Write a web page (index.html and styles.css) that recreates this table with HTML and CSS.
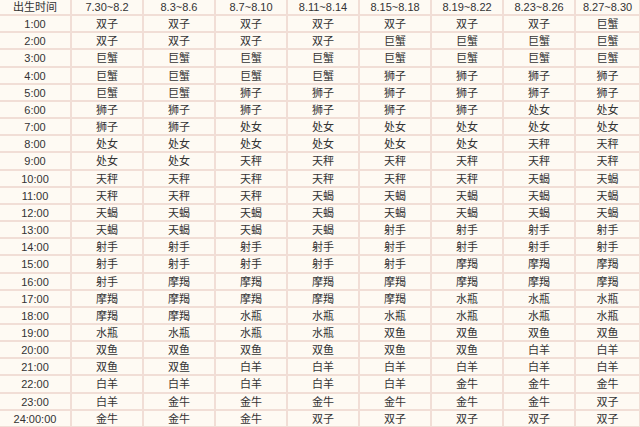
FILE: index.html
```html
<!DOCTYPE html>
<html lang="zh">
<head>
<meta charset="utf-8">
<title>出生时间星座表</title>
<link rel="stylesheet" href="styles.css">
</head>
<body>
<table class="zodiac">
<colgroup><col class="c"><col class="c"><col class="c"><col class="c"><col class="c"><col class="c"><col class="c"><col class="c"><col class="last"></colgroup>
<thead>
<tr><td>出生时间</td><td>7.30~8.2</td><td>8.3~8.6</td><td>8.7~8.10</td><td>8.11~8.14</td><td>8.15~8.18</td><td>8.19~8.22</td><td>8.23~8.26</td><td>8.27~8.30</td></tr>
</thead>
<tbody>
<tr><td>1:00</td><td>双子</td><td>双子</td><td>双子</td><td>双子</td><td>双子</td><td>双子</td><td>双子</td><td>巨蟹</td></tr>
<tr><td>2:00</td><td>双子</td><td>双子</td><td>双子</td><td>双子</td><td>巨蟹</td><td>巨蟹</td><td>巨蟹</td><td>巨蟹</td></tr>
<tr><td>3:00</td><td>巨蟹</td><td>巨蟹</td><td>巨蟹</td><td>巨蟹</td><td>巨蟹</td><td>巨蟹</td><td>巨蟹</td><td>巨蟹</td></tr>
<tr><td>4:00</td><td>巨蟹</td><td>巨蟹</td><td>巨蟹</td><td>巨蟹</td><td>狮子</td><td>狮子</td><td>狮子</td><td>狮子</td></tr>
<tr><td>5:00</td><td>巨蟹</td><td>巨蟹</td><td>狮子</td><td>狮子</td><td>狮子</td><td>狮子</td><td>狮子</td><td>狮子</td></tr>
<tr><td>6:00</td><td>狮子</td><td>狮子</td><td>狮子</td><td>狮子</td><td>狮子</td><td>狮子</td><td>处女</td><td>处女</td></tr>
<tr><td>7:00</td><td>狮子</td><td>狮子</td><td>处女</td><td>处女</td><td>处女</td><td>处女</td><td>处女</td><td>处女</td></tr>
<tr><td>8:00</td><td>处女</td><td>处女</td><td>处女</td><td>处女</td><td>处女</td><td>处女</td><td>天秤</td><td>天秤</td></tr>
<tr><td>9:00</td><td>处女</td><td>处女</td><td>天秤</td><td>天秤</td><td>天秤</td><td>天秤</td><td>天秤</td><td>天秤</td></tr>
<tr><td>10:00</td><td>天秤</td><td>天秤</td><td>天秤</td><td>天秤</td><td>天秤</td><td>天秤</td><td>天蝎</td><td>天蝎</td></tr>
<tr><td>11:00</td><td>天秤</td><td>天秤</td><td>天秤</td><td>天蝎</td><td>天蝎</td><td>天蝎</td><td>天蝎</td><td>天蝎</td></tr>
<tr><td>12:00</td><td>天蝎</td><td>天蝎</td><td>天蝎</td><td>天蝎</td><td>天蝎</td><td>天蝎</td><td>天蝎</td><td>天蝎</td></tr>
<tr><td>13:00</td><td>天蝎</td><td>天蝎</td><td>天蝎</td><td>天蝎</td><td>射手</td><td>射手</td><td>射手</td><td>射手</td></tr>
<tr><td>14:00</td><td>射手</td><td>射手</td><td>射手</td><td>射手</td><td>射手</td><td>射手</td><td>射手</td><td>射手</td></tr>
<tr><td>15:00</td><td>射手</td><td>射手</td><td>射手</td><td>射手</td><td>射手</td><td>摩羯</td><td>摩羯</td><td>摩羯</td></tr>
<tr><td>16:00</td><td>射手</td><td>摩羯</td><td>摩羯</td><td>摩羯</td><td>摩羯</td><td>摩羯</td><td>摩羯</td><td>摩羯</td></tr>
<tr><td>17:00</td><td>摩羯</td><td>摩羯</td><td>摩羯</td><td>摩羯</td><td>摩羯</td><td>水瓶</td><td>水瓶</td><td>水瓶</td></tr>
<tr><td>18:00</td><td>摩羯</td><td>摩羯</td><td>水瓶</td><td>水瓶</td><td>水瓶</td><td>水瓶</td><td>水瓶</td><td>水瓶</td></tr>
<tr><td>19:00</td><td>水瓶</td><td>水瓶</td><td>水瓶</td><td>水瓶</td><td>双鱼</td><td>双鱼</td><td>双鱼</td><td>双鱼</td></tr>
<tr><td>20:00</td><td>双鱼</td><td>双鱼</td><td>双鱼</td><td>双鱼</td><td>双鱼</td><td>双鱼</td><td>白羊</td><td>白羊</td></tr>
<tr><td>21:00</td><td>双鱼</td><td>双鱼</td><td>白羊</td><td>白羊</td><td>白羊</td><td>白羊</td><td>白羊</td><td>白羊</td></tr>
<tr><td>22:00</td><td>白羊</td><td>白羊</td><td>白羊</td><td>白羊</td><td>白羊</td><td>金牛</td><td>金牛</td><td>金牛</td></tr>
<tr><td>23:00</td><td>白羊</td><td>金牛</td><td>金牛</td><td>金牛</td><td>金牛</td><td>金牛</td><td>金牛</td><td>双子</td></tr>
<tr><td>24:00:00</td><td>金牛</td><td>金牛</td><td>金牛</td><td>双子</td><td>双子</td><td>双子</td><td>双子</td><td>双子</td></tr>
</tbody>
</table>
</body>
</html>
```
FILE: styles.css
```css
html, body {
  margin: 0;
  padding: 0;
  background: #fefaf3;
  overflow: hidden;
}
.zodiac {
  border-collapse: separate;
  border-spacing: 0;
  table-layout: fixed;
  width: 641px;
  margin: -2px 0 0 -1px;
  font-family: "Liberation Sans", "Noto Sans CJK SC", sans-serif;
  font-size: 11px;
  color: #333333;
}
.zodiac col.c {
  width: 72px;
}
.zodiac col.last {
  width: 65px;
}
.zodiac td {
  border: 1px solid #f1ded6;
  padding: 2px 0 0;
  line-height: 13.16px;
  text-align: center;
  white-space: nowrap;
  overflow: hidden;
}
```
